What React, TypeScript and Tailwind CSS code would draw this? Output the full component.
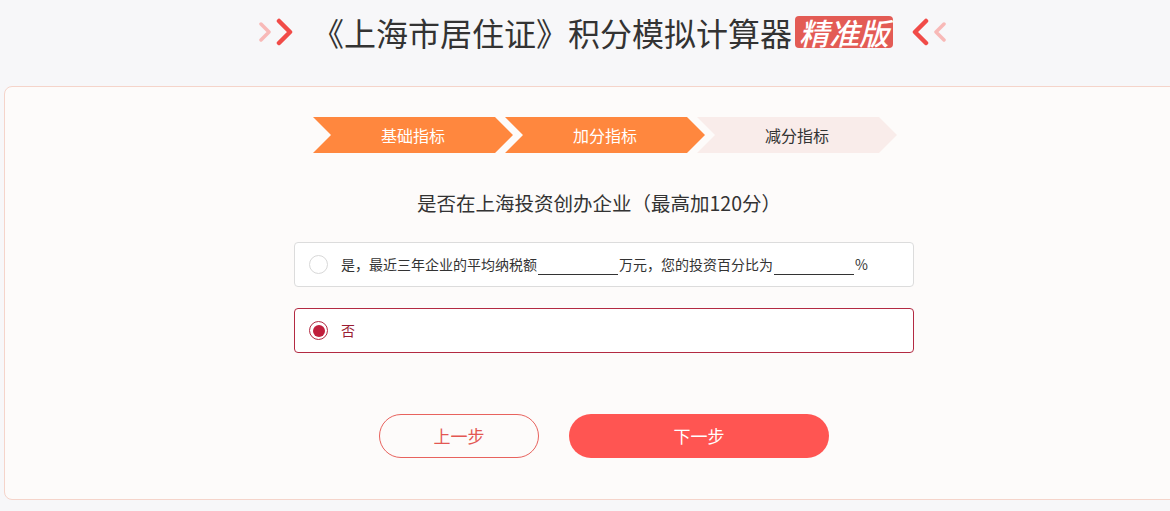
import React from "react";

const font = { fontFamily: '"Noto Sans CJK SC", "Noto Sans", sans-serif' };

const steps = [
  { label: "基础指标", active: true },
  { label: "加分指标", active: true },
  { label: "减分指标", active: false },
];

const arrowClip =
  "[clip-path:polygon(0_0,calc(100%-18px)_0,100%_50%,calc(100%-18px)_100%,0_100%,18px_50%)]";

function Chevrons({ dir }: { dir: "right" | "left" }) {
  if (dir === "right") {
    return (
      <svg width="36" height="28" viewBox="0 0 36 28" className="shrink-0">
        <polyline points="2,6 10,14 2,22" fill="none" stroke="#f8b9b7" strokeWidth="3.5" strokeLinecap="round" strokeLinejoin="round" />
        <polyline points="20,3 31,14 20,25" fill="none" stroke="#f14b48" strokeWidth="4.5" strokeLinecap="round" strokeLinejoin="round" />
      </svg>
    );
  }
  return (
    <svg width="36" height="28" viewBox="0 0 36 28" className="shrink-0">
      <polyline points="16,3 5,14 16,25" fill="none" stroke="#f14b48" strokeWidth="4.5" strokeLinecap="round" strokeLinejoin="round" />
      <polyline points="34,6 26,14 34,22" fill="none" stroke="#f8b9b7" strokeWidth="3.5" strokeLinecap="round" strokeLinejoin="round" />
    </svg>
  );
}

function Blank() {
  return <span className="inline-block w-[80px] border-b border-[#333] h-[14px] mx-[1px]" />;
}

export default function App() {
  return (
    <div className="min-h-screen w-full overflow-hidden bg-[#f7f7f9]" style={font}>
      {/* header */}
      <div className="h-[86px] flex items-start pt-[16px] pl-[259px]">
        <div className="flex items-center h-[32px]">
          <Chevrons dir="right" />
          <h1 className="ml-[17px] text-[32px] leading-[32px] text-[#333] font-normal whitespace-nowrap">
            《上海市居住证》积分模拟计算器
          </h1>
          <span className="ml-[3px] h-[32px] px-[4px] rounded-[4px] bg-[#e35b55] text-white text-[30px] leading-[32px] italic font-medium whitespace-nowrap">
            精准版
          </span>
          <span className="ml-[17px]">
            <Chevrons dir="left" />
          </span>
        </div>
      </div>

      {/* card */}
      <div className="ml-[4px] w-[1190px] h-[414px] border border-[#f5d4ca] rounded-l-[8px] bg-[#fdfbfa]">
        <div className="ml-[289px] w-[620px] pt-[30px]">
          {/* steps */}
          <div className="flex ml-[19px]">
            {steps.map((s, i) => (
              <div
                key={s.label}
                className={`w-[200px] h-[36px] flex items-center justify-center text-[16px] ${arrowClip} ${
                  i > 0 ? "-ml-[8px]" : ""
                } ${s.active ? "bg-[#ff873e] text-white" : "bg-[#f9ecea] text-[#333]"}`}
              >
                {s.label}
              </div>
            ))}
          </div>

          {/* question */}
          <p className="mt-[38px] text-center text-[19.5px] leading-[24px] text-[#333] pr-[10px]">
            是否在上海投资创办企业（最高加120分）
          </p>

          {/* options */}
          <div className="mt-[27px] h-[45px] flex items-center bg-white border border-[#dcdcdc] rounded-[4px] pl-[14px]">
            <span className="w-[19px] h-[19px] rounded-full border border-[#d8d8d8] bg-white shrink-0" />
            <span className="ml-[13px] text-[14px] text-[#333] flex items-end whitespace-nowrap">
              是，最近三年企业的平均纳税额
              <Blank />
              万元，您的投资百分比为
              <Blank />%
            </span>
          </div>

          <div className="mt-[21px] h-[45px] flex items-center bg-white border border-[#b32a42] rounded-[4px] pl-[14px]">
            <span className="w-[19px] h-[19px] rounded-full border-[1.5px] border-[#b32a42] bg-white shrink-0 flex items-center justify-center">
              <span className="w-[12px] h-[12px] rounded-full bg-[#c01f3c]" />
            </span>
            <span className="ml-[13px] text-[14px] text-[#9a1d33]">否</span>
          </div>

          {/* buttons */}
          <div className="mt-[61px] flex ml-[85px] gap-[30px]">
            <button className="w-[160px] h-[44px] rounded-full border border-[#e8625d] text-[#e35752] text-[17px] bg-transparent">
              上一步
            </button>
            <button className="w-[260px] h-[44px] rounded-full bg-[#ff5552] text-white text-[17px]">
              下一步
            </button>
          </div>
        </div>
      </div>
    </div>
  );
}
